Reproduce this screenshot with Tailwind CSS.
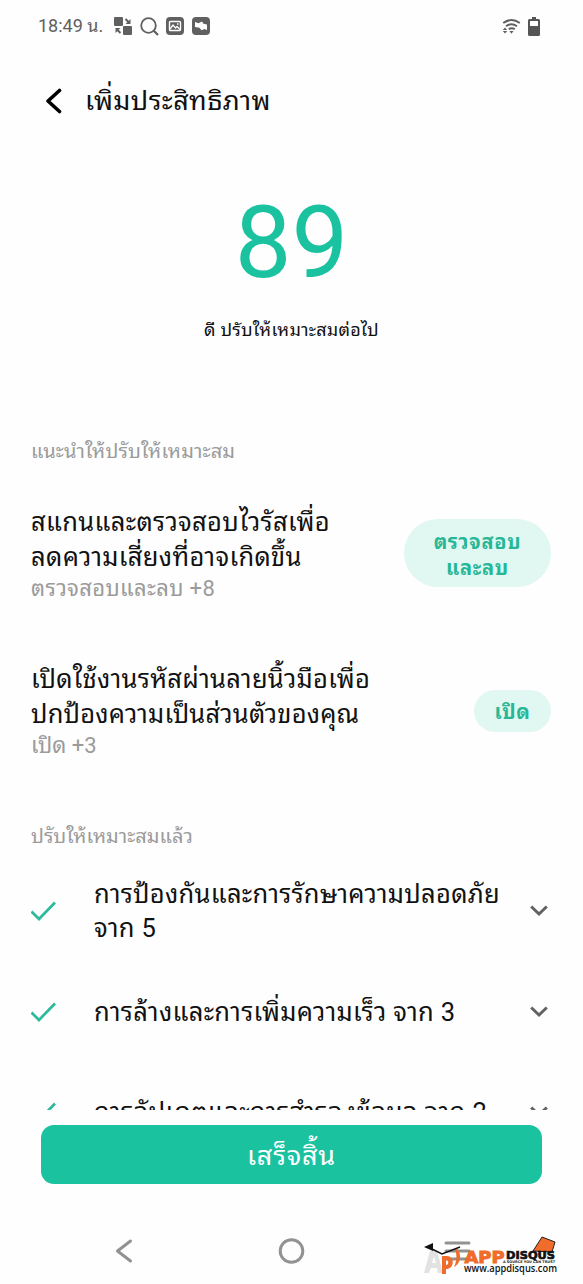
<!DOCTYPE html>
<html lang="th">
<head>
<meta charset="utf-8">
<meta name="viewport" content="width=device-width, initial-scale=1">
<title>เพิ่มประสิทธิภาพ</title>
<script src="https://cdn.jsdelivr.net/npm/@tailwindcss/browser@4"></script>
</head>
<body class="bg-[#fefefe]">
<div class="flex h-[1284px] w-[583px] flex-col overflow-hidden bg-[#fefefe] font-[Roboto,'Droid_Sans_Thai','Noto_Sans_Thai_Looped',Loma,Waree,Umpush,Garuda,'Noto_Sans_Thai',sans-serif] whitespace-nowrap text-[#111]">
  <header class="flex h-[52px] shrink-0 items-center pr-[43px] pl-[38px] text-[#606060]">
    <span class="w-[76px] text-[18px] leading-[26px]">18:49 น.</span>
    <svg class="size-[18px]" viewBox="0 0 18 18" fill="currentColor"><rect width="9" height="9" rx="1"/><rect x="9" y="9" width="9" height="9" rx="1"/><path d="M11.500 2l3 3M6.500 16l-3-3" stroke="currentColor" stroke-width="2"/><path d="M16.500 2v5h-5zM1.500 16v-5h5z"/></svg>
    <svg class="ml-2 size-[19px]" viewBox="0 0 19 19" fill="none" stroke="currentColor" stroke-width="1.800"><circle cx="8.500" cy="8.500" r="7.300"/><path d="M13.500 13.500l4.500 4.500" stroke-width="2.300"/></svg>
    <svg class="ml-[7px] size-[18px]" viewBox="0 0 18 18"><rect width="18" height="18" rx="4" fill="currentColor"/><rect x="3.500" y="4.500" width="11" height="9" rx="1" fill="none" stroke="#fff" stroke-width="1.400"/><path d="M4 12l3-4 2.500 3 1.500-1.500 3 3M11 7h1.500" fill="none" stroke="#fff" stroke-width="1.300"/></svg>
    <svg class="ml-2 size-[18px]" viewBox="0 0 18 18"><rect width="18" height="18" rx="4" fill="currentColor"/><path d="M3 5l3.500 1.300L10 4.500l1.500 2.300 3.500.7v5.500l-2.500-1-3 1.200-2-2.400L3 10z" fill="#fff"/></svg>
    <div class="grow"></div>
    <svg class="h-[17px] w-[19px]" viewBox="0 0 19 17" fill="none" stroke="currentColor" stroke-width="2"><path d="M1.200 5q8.300-6 16.600 0M4 8.200q5.500-4 11 0M6.800 11.200q3-2 6 0"/><path d="M.8 12L3 9.500 5.200 12zM.8 13L3 15.500 5.200 13zM7.500 13h4l-2 2.700z" fill="currentColor" stroke="none"/></svg>
    <svg class="ml-[7px] h-[19px] w-[12px]" viewBox="0 0 12 19"><path d="M4 0h4v2h2.500A1.500 1.500 0 0 1 12 3.500v14a1.500 1.500 0 0 1-1.500 1.500h-9A1.500 1.500 0 0 1 0 17.500v-14A1.500 1.500 0 0 1 1.500 2H4z" fill="#555"/><path d="M2 4h8v5H2z" fill="#fff"/></svg>
  </header>

  <div class="flex h-[98px] shrink-0 items-center pl-[45px]">
    <svg class="h-[26px] w-[17px]" viewBox="0 0 17 26" fill="none" stroke="#000" stroke-width="3.600" stroke-linecap="round" stroke-linejoin="round"><path d="M14.500 2.500L3 13l11.500 10.500"/></svg>
    <h1 class="ml-[23px] text-[27px] leading-[36px] tracking-[0.4px]">เพิ่มประสิทธิภาพ</h1>
  </div>

  <section class="flex h-[265px] shrink-0 flex-col items-center pt-[33px]">
    <div class="text-[101px] leading-[120px] text-[#1bc2a0]">89</div>
    <p class="mt-[13px] text-[18px] leading-[28px] tracking-[0.2px]">ดี ปรับให้เหมาะสมต่อไป</p>
  </section>

  <main class="flex h-[695px] shrink-0 flex-col overflow-hidden pr-[32px] pl-[31px]">
    <h2 class="mt-[21px] text-[20px] leading-[30px] tracking-[0.1px] text-[#9b9b9b]">แนะนำให้ปรับให้เหมาะสม</h2>
    <div class="mt-[39px] flex h-[100px] items-start justify-between">
      <div>
        <p class="text-[25.5px] leading-[34.500px] tracking-[0.35px]">สแกนและตรวจสอบไวรัสเพื่อ<br>ลดความเสี่ยงที่อาจเกิดขึ้น</p>
        <p class="text-[22px] leading-[30px] tracking-[0.35px] text-[#9b9b9b]">ตรวจสอบและลบ +8</p>
      </div>
      <button class="mt-[14px] h-[68px] w-[147px] rounded-full bg-[#e1f7f2] pt-[3px] text-center text-[20px] leading-[26px] font-bold tracking-[0.7px] text-[#27b797]">ตรวจสอบ<br>และลบ</button>
    </div>
    <div class="mt-[58px] flex h-[100px] items-start justify-between">
      <div>
        <p class="text-[25.5px] leading-[34.500px] tracking-[0.2px]"><span class="tracking-[0.3px]">เปิดใช้งานรหัสผ่านลายนิ้วมือเพื่อ</span><br>ปกป้องความเป็นส่วนตัวของคุณ</p>
        <p class="text-[22px] leading-[30px] text-[#9b9b9b]">เปิด +3</p>
      </div>
      <button class="mt-[28px] h-[42px] w-[77px] rounded-full bg-[#e1f7f2] pt-[2px] text-center text-[20px] leading-[26px] font-bold tracking-[0.7px] text-[#27b797]">เปิด</button>
    </div>
    <h2 class="mt-[60px] text-[20px] leading-[30px] text-[#9b9b9b]">ปรับให้เหมาะสมแล้ว</h2>
    <div class="mt-[25px] flex h-[70px] shrink-0 items-center">
      <svg class="h-[20px] w-[25px]" viewBox="0 0 25 20" fill="none" stroke="#2db99b" stroke-width="2.700"><path d="M.5 10.500L8 18 24 1.500"/></svg>
      <p class="ml-[38px] grow text-[25.5px] leading-[34.500px] tracking-[0.3px]">การป้องกันและการรักษาความปลอดภัย<br>จาก 5</p>
      <svg class="mr-[3px] h-[12px] w-[18px]" viewBox="0 0 18 12" fill="none" stroke="#626262" stroke-width="3"><path d="M1.200 1.500L9 9l7.800-7.500"/></svg>
    </div>
    <div class="mt-[48px] flex h-[36px] shrink-0 items-center">
      <svg class="h-[20px] w-[25px]" viewBox="0 0 25 20" fill="none" stroke="#2db99b" stroke-width="2.700"><path d="M.5 10.500L8 18 24 1.500"/></svg>
      <p class="ml-[38px] grow text-[25.5px] leading-[34.500px] tracking-[0.35px]">การล้างและการเพิ่มความเร็ว จาก 3</p>
      <svg class="mr-[3px] h-[12px] w-[18px]" viewBox="0 0 18 12" fill="none" stroke="#626262" stroke-width="3"><path d="M1.200 1.500L9 9l7.800-7.500"/></svg>
    </div>
    <div class="mt-[64px] flex h-[36px] shrink-0 items-center">
      <svg class="h-[20px] w-[25px]" viewBox="0 0 25 20" fill="none" stroke="#2db99b" stroke-width="2.700"><path d="M.5 10.500L8 18 24 1.500"/></svg>
      <p class="ml-[38px] grow text-[25.5px] leading-[34.500px] tracking-[0.4px]">การอัปเดตและการสำรองข้อมูล จาก 2</p>
      <svg class="mr-[3px] h-[12px] w-[18px]" viewBox="0 0 18 12" fill="none" stroke="#626262" stroke-width="3"><path d="M1.200 1.500L9 9l7.800-7.500"/></svg>
    </div>
  </main>

  <button class="mt-[15px] ml-[41px] h-[59px] w-[501px] shrink-0 rounded-[13px] bg-[#1bc2a0] pt-[4px] text-center text-[27px] tracking-[0.8px] text-white">เสร็จสิ้น</button>

  <nav class="relative mt-[36px] h-[64px] shrink-0">
    <svg class="h-[64px] w-[583px]" viewBox="0 1220 583 64" fill="none" stroke="#929292" stroke-width="3" stroke-linecap="round"><path d="M130.500 1241l-13 10 13 10" stroke-linejoin="round"/><circle cx="291.500" cy="1251" r="11.300"/><path d="M446 1243h23M446 1251h23M446 1259h23"/></svg>
    <svg class="absolute top-0 left-[400px] h-[64px] w-[183px]" viewBox="0 0 183 64">
      <path d="M24 53l6-22h7l6 22h-5l-1-5h-6l-2 5zM32 43h4l-2-7z" fill="#e2e2e2" fill-rule="evenodd"/>
      <path d="M42 36h4v18h-4zM46 36c9-1 9 13 0 13v-4c3 0 3-5 0-5zM55 28c7 3 7 15-1 19 3-6 3-12 1-19" fill="#ef6c2a"/>
      <path d="M24 27l9-4v8z" fill="#111"/><path d="M32 29l10 5 18-7" fill="none" stroke="#111" stroke-width="1.400"/>
      <path d="M142 17l13 5-3 10-19-1z" fill="#ef6c2a" stroke="#222" stroke-width="1"/>
      <text x="64.500" y="42.500" font-family="DejaVu Sans, sans-serif" font-weight="700" font-size="16" fill="#ef6c2a" stroke="#ef6c2a" stroke-width=".9" textLength="40" lengthAdjust="spacingAndGlyphs">APP</text>
      <text x="106" y="38.500" font-family="DejaVu Sans, sans-serif" font-weight="700" font-size="11" fill="#111" stroke="#111" stroke-width=".7" textLength="49" lengthAdjust="spacingAndGlyphs">DISQUS</text>
      <text x="103" y="43" font-family="DejaVu Sans, sans-serif" font-weight="700" font-size="3.600" fill="#222" textLength="52" lengthAdjust="spacingAndGlyphs">A SOURCE YOU CAN TRUST</text>
      <text x="64" y="51.500" font-family="Open Sans, sans-serif" font-weight="600" font-size="10.800" fill="#111" textLength="93" lengthAdjust="spacingAndGlyphs">www.appdisqus.com</text>
    </svg>
  </nav>
</div>
</body>
</html>
